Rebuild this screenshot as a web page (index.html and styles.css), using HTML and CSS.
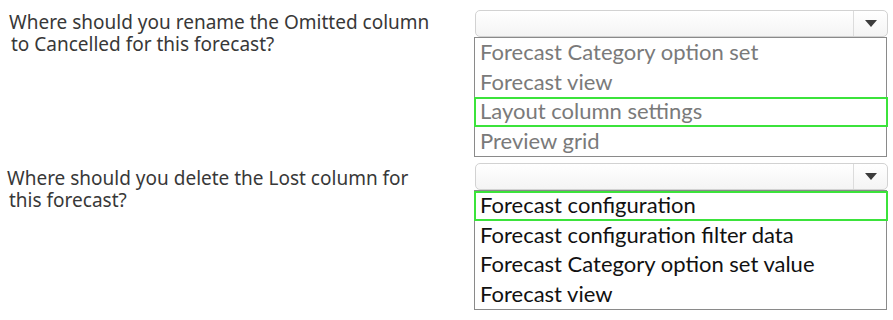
FILE: index.html
```html
<!DOCTYPE html>
<html>
<head>
<meta charset="utf-8">
<link rel="stylesheet" href="styles.css">
</head>
<body>
<div class="page">
  <section class="qa qa-first">
    <p class="question">Where should you rename the Omitted column<br><span class="indent">to Cancelled for this forecast?</span></p>
    <div class="answer">
      <div class="select">
        <div class="select-value"></div>
        <div class="select-button"><span class="caret"></span></div>
      </div>
      <ul class="options options-muted">
        <li class="option">Forecast Category option set</li>
        <li class="option">Forecast view</li>
        <li class="option option-correct">Layout column settings</li>
        <li class="option">Preview grid</li>
      </ul>
    </div>
  </section>
  <section class="qa qa-second">
    <p class="question">Where should you delete the Lost column for<br><span class="indent">this forecast?</span></p>
    <div class="answer">
      <div class="select">
        <div class="select-value"></div>
        <div class="select-button"><span class="caret"></span></div>
      </div>
      <ul class="options">
        <li class="option option-correct">Forecast configuration</li>
        <li class="option">Forecast configuration filter data</li>
        <li class="option">Forecast Category option set value</li>
        <li class="option">Forecast view</li>
      </ul>
    </div>
  </section>
</div>
</body>
</html>
```
FILE: styles.css
```css
html, body {
  margin: 0;
  padding: 0;
  background: #ffffff;
}

.page {
  width: 893px;
  height: 320px;
  overflow: hidden;
}

.qa {
  display: grid;
  grid-template-columns: 474px 414px;
}

.qa-first {
  padding-top: 10px;
}

.qa-second {
  padding-top: 6px;
}

.question {
  margin: 0;
  font-family: "Noto Sans", "Open Sans", sans-serif;
  font-size: 19px;
  line-height: 22px;
  color: #383838;
}

.qa-first .question {
  padding: 1px 0 0 9px;
}

.qa-second .question {
  padding: 4px 0 0 7px;
}

.indent {
  padding-left: 2px;
}

.answer {
  display: flex;
  flex-direction: column;
}

.select {
  display: flex;
  height: 27px;
  margin-left: 1px;
  box-sizing: border-box;
  border: 1px solid #d2d2d2;
  border-radius: 5px;
  background: linear-gradient(#ffffff, #f4f4f4);
}

.select-value {
  flex: 1;
}

.select-button {
  width: 33px;
  border-left: 1px solid #dcdcdc;
  display: flex;
  align-items: center;
  justify-content: center;
}

.caret {
  width: 0;
  height: 0;
  border-left: 6px solid transparent;
  border-right: 6px solid transparent;
  border-top: 7px solid #3c3c3c;
}

.options {
  list-style: none;
  margin: 0;
  padding: 0;
  width: 413px;
  box-sizing: border-box;
  border: 1px solid #8a8a8a;
  font-family: "Lato", "Open Sans", sans-serif;
  font-size: 22px;
  color: #111111;
}

.options-muted {
  color: #7a7a7a;
}

.option {
  height: 29.5px;
  line-height: 28.5px;
  padding-left: 5px;
  box-sizing: border-box;
  white-space: nowrap;
}

.option-correct {
  margin: 0 -2px 0 -1px;
  border: 2px solid #3be33b;
  padding-left: 4px;
  line-height: 24.5px;
}
```
